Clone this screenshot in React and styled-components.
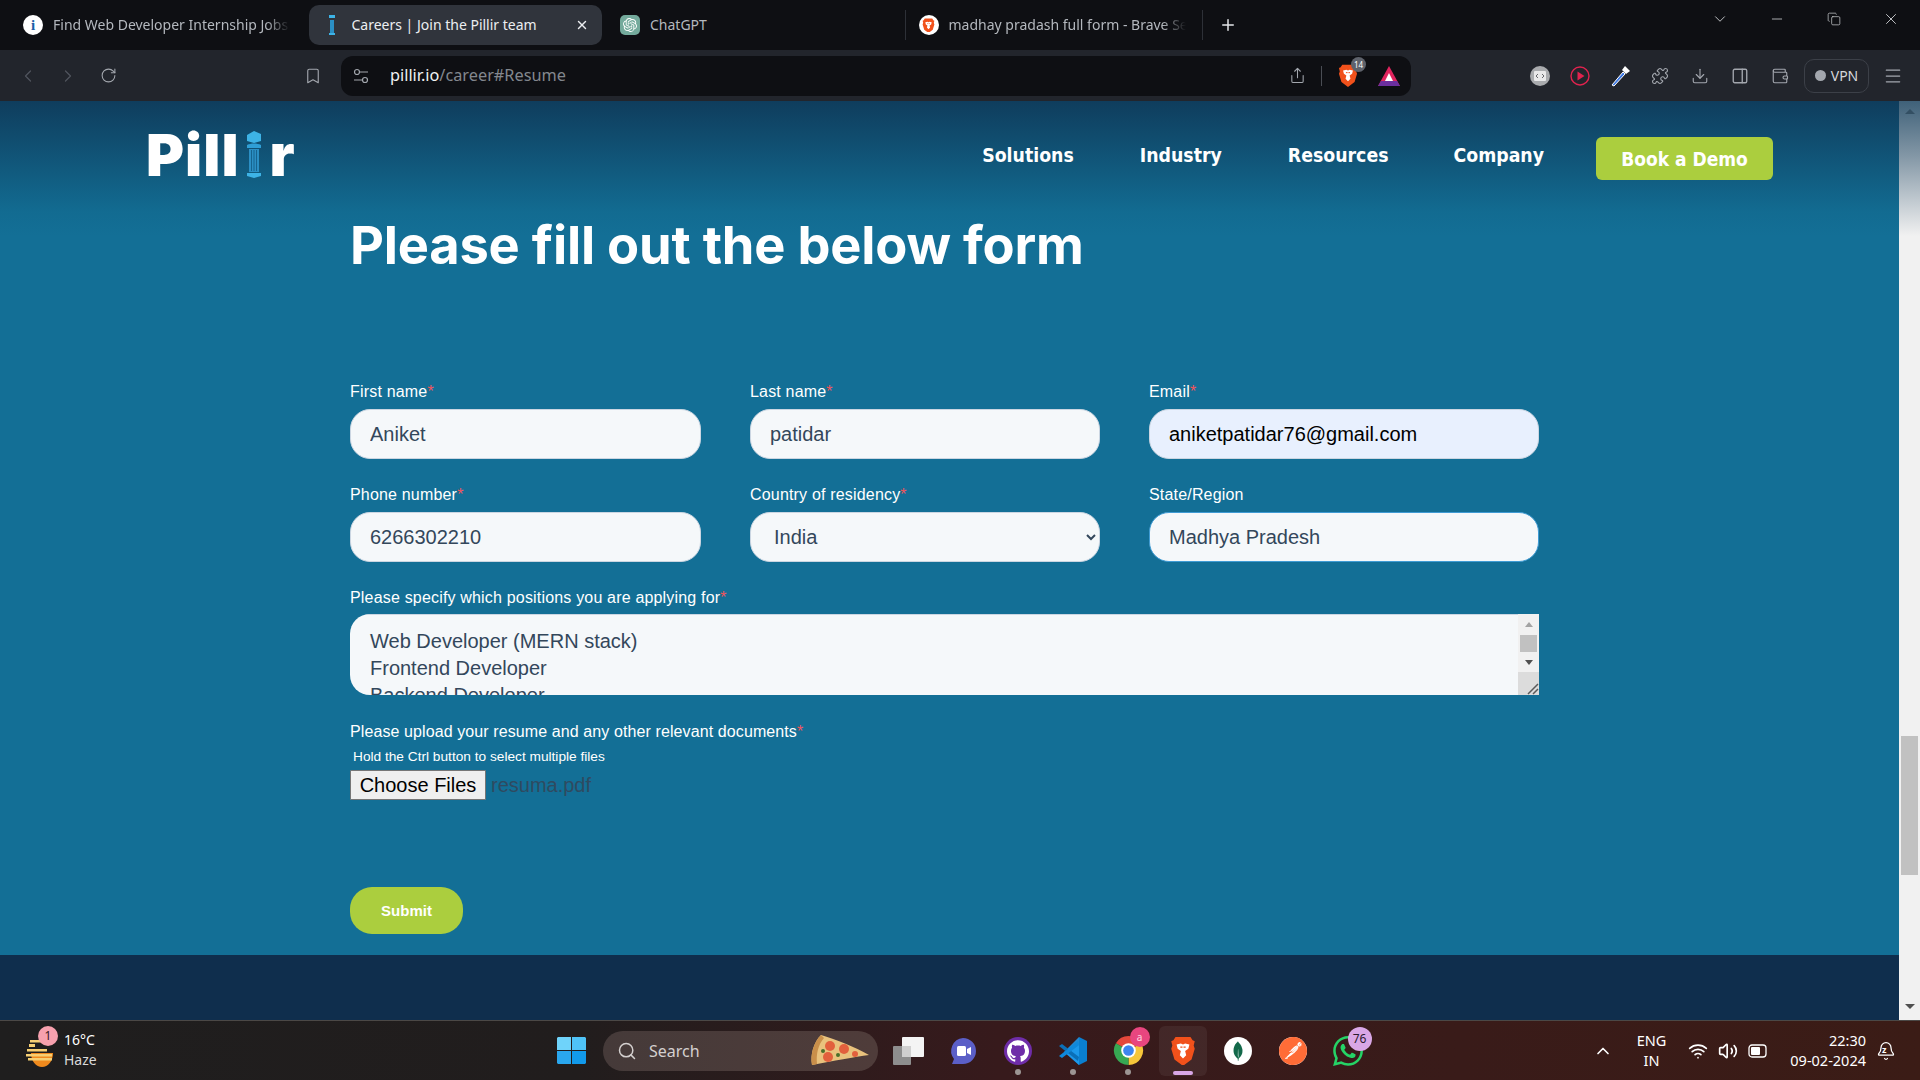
import React from 'react';
import styled, { createGlobalStyle } from 'styled-components';
import {
  ChevronLeft, ChevronRight, ChevronDown, ChevronUp, RotateCw, Bookmark, Share, Puzzle, Download,
  PanelRight, Wallet, Menu, Minus, Copy, X, Plus, Search, Wifi, Volume2, Bell,
} from 'lucide-react';
import { SiOpenai, SiGithub, SiMongodb, SiPostman, SiWhatsapp } from 'react-icons/si';

const GlobalStyle = createGlobalStyle`
  html, body {
    margin: 0;
    padding: 0;
    background: #0e0f13;
  }
  * {
    box-sizing: border-box;
  }
`;

const uiFont = `'Noto Sans', 'Open Sans', sans-serif`;
const formFont = `'Liberation Sans', Arial, sans-serif`;

/* ---- browser chrome ---- */

const Viewport = styled.div`
  display: flex;
  flex-direction: column;
  width: 1920px;
  height: 1080px;
  overflow: hidden;
`;

const TabStrip = styled.div`
  display: flex;
  align-items: center;
  flex: 0 0 50px;
  padding-left: 10px;
  background: #0e0f13;
  font-family: ${uiFont};
`;

const Tab = styled.div`
  display: flex;
  align-items: center;
  gap: 10px;
  width: 293px;
  height: 40px;
  margin-right: 5.5px;
  padding: 0 13px;
  border-radius: 10px;
  background: ${({ $active }) => ($active ? '#30343c' : 'transparent')};
  color: ${({ $active }) => ($active ? '#eceef1' : '#b4b8be')};
  font-size: 14px;
`;

const TabTitle = styled.span`
  flex: 1;
  padding-bottom: 2px;
  overflow: hidden;
  white-space: nowrap;
  mask-image: ${({ $fade }) => ($fade ? 'linear-gradient(90deg, #000 90%, transparent)' : 'none')};
`;

const Favicon = styled.span`
  display: flex;
  align-items: center;
  justify-content: center;
  flex: 0 0 20px;
  height: 20px;
  border-radius: ${({ $radius }) => $radius || '50%'};
  background: ${({ $bg }) => $bg || 'transparent'};
  color: ${({ $color }) => $color || '#fff'};
  font: 700 15px 'Liberation Serif', serif;
`;

const TabDivider = styled.span`
  width: 1px;
  height: 30px;
  margin-left: ${({ $offset }) => $offset || '0'};
  background: #2d3037;
`;

const NewTab = styled.span`
  display: flex;
  margin-left: 16px;
  color: #e4e6e9;
`;

const WindowControls = styled.div`
  display: flex;
  align-items: center;
  margin-left: auto;
  margin-top: -12px;
  padding-right: 1px;
  color: #d0d2d6;
`;

const WindowButton = styled.span`
  display: flex;
  justify-content: center;
  width: 57px;
`;

const Toolbar = styled.div`
  display: flex;
  align-items: center;
  flex: 0 0 51px;
  padding-left: 8px;
  background: #22252c;
  font-family: ${uiFont};
`;

const ToolButton = styled.span`
  display: flex;
  align-items: center;
  justify-content: center;
  flex: 0 0 40px;
  height: 40px;
  margin-left: ${({ $offset }) => $offset || '0'};
  color: ${({ $dim }) => ($dim ? '#50545d' : '#a3a7ae')};
`;

const AddressBar = styled.div`
  display: flex;
  align-items: center;
  width: 1070px;
  height: 40px;
  margin-left: 8px;
  padding: 0 11px 0 12px;
  border-radius: 12px;
  background: #0e0f13;
  color: #a3a7ae;
`;

const AddressText = styled.span`
  margin-left: 21px;
  padding-bottom: 2px;
  font-size: 16.3px;
  color: #83878e;
  b {
    font-weight: 400;
    color: #f1f2f4;
  }
`;

const AddressActions = styled.div`
  display: flex;
  align-items: center;
  margin-left: auto;
`;

const ActionDivider = styled.span`
  width: 1px;
  height: 20px;
  margin: 0 16px 0 15px;
  background: #4a4d54;
`;

const ShieldWrap = styled.span`
  position: relative;
  display: flex;
  margin-right: 20px;
`;

const ShieldCount = styled.span`
  position: absolute;
  top: -7px;
  right: -8px;
  width: 15px;
  height: 15px;
  border-radius: 50%;
  background: #5e626b;
  color: #fff;
  font-size: 8px;
  line-height: 15px;
  text-align: center;
`;

const VpnButton = styled.span`
  display: flex;
  align-items: center;
  justify-content: center;
  gap: 5px;
  width: 65px;
  height: 34px;
  margin: 0 4px;
  border: 1px solid #3c4048;
  border-radius: 10px;
  color: #d5d7db;
  font-size: 14px;
  &::before {
    content: '';
    width: 11px;
    height: 11px;
    border-radius: 50%;
    background: #a3a7ae;
  }
`;

/* ---- the page ---- */

const Main = styled.div`
  display: flex;
  flex: 1;
  min-height: 0;
`;

const Page = styled.div`
  display: flex;
  flex-direction: column;
  flex: 1;
  background: linear-gradient(180deg, #0f3d5d 0, #126b91 110px, #136f96 135px);
`;

const Rail = styled.div`
  display: flex;
  flex-direction: column;
  flex: 0 0 21px;
  background: linear-gradient(180deg, #3f6179 0, #8397a6 55px, #f1f1f1 135px);
`;

const RailArrow = styled.div`
  display: flex;
  align-items: center;
  justify-content: center;
  flex: 0 0 21px;
  margin-top: ${({ $bottom }) => ($bottom ? 'auto' : '0')};
  margin-bottom: ${({ $bottom }) => ($bottom ? '3px' : '0')};
  &::before {
    content: '';
    border-left: 5px solid transparent;
    border-right: 5px solid transparent;
    ${({ $bottom }) => ($bottom ? 'border-top: 5px solid #505050;' : 'border-bottom: 5px solid #334f63;')}
  }
`;

const RailThumb = styled.div`
  height: 139px;
  margin: 614px 2px 0;
  background: #c1c1c1;
`;

const Header = styled.header`
  display: flex;
  align-items: flex-start;
  justify-content: space-between;
  height: 113px;
  padding: 29px 126px 0 146px;
`;

const Logo = styled.div`
  display: flex;
  align-items: flex-end;
  height: 48px;
  margin-top: 1px;
  color: #fff;
  font: 900 58px/48px Inter, sans-serif;
  letter-spacing: 1px;
  svg {
    margin: 0 8px 0 6px;
  }
`;

const Nav = styled.nav`
  display: flex;
  align-items: flex-start;
`;

const NavLink = styled.a`
  margin-right: ${({ $gap }) => $gap};
  padding-top: 4px;
  color: #fff;
  font: 700 19.3px/44px 'DejaVu Sans Condensed', 'DejaVu Sans', sans-serif;
`;

const DemoButton = styled.button`
  width: 177px;
  height: 43px;
  margin-top: 7px;
  border: 0;
  border-radius: 6px;
  background: #abce3e;
  color: #fff;
  font: 700 19px 'DejaVu Sans Condensed', 'DejaVu Sans', sans-serif;
`;

const FormSection = styled.form`
  flex: 1;
  padding-left: 350px;
  font-family: ${formFont};
`;

const Heading = styled.h1`
  margin: 0 0 104px;
  color: #fff;
  font: 700 52.4px/62px Inter, sans-serif;
  letter-spacing: -0.2px;
`;

const FieldGrid = styled.div`
  display: grid;
  grid-template-columns: 351px 350px 390px;
  column-gap: 49px;
  row-gap: 24px;
  width: 1190px;
`;

const Label = styled.label`
  display: block;
  height: 20px;
  margin-bottom: ${({ $tight }) => ($tight ? '8px' : '9px')};
  color: #fff;
  font-size: 16px;
  line-height: 23px;
  letter-spacing: 0.18px;
`;

const Required = styled.span`
  color: #f2545b;
`;

const TextInput = styled.input`
  display: block;
  width: 100%;
  height: 50px;
  padding: 0 19px;
  border: 1px solid ${({ $focused }) => ($focused ? '#3f9bd4' : '#cbd6e2')};
  border-radius: 20px;
  outline: 0;
  background: ${({ $autofill }) => ($autofill ? '#e8f0fe' : '#f5f8fa')};
  color: ${({ $autofill }) => ($autofill ? '#000' : '#33475b')};
  font: 20px ${formFont};
`;

const SelectInput = styled.select`
  display: block;
  width: 100%;
  height: 50px;
  padding: 0 3px 0 19px;
  border: 1px solid #cbd6e2;
  border-radius: 20px;
  outline: 0;
  background: #f5f8fa;
  color: #33475b;
  font: 20px ${formFont};
`;

const AreaField = styled.div`
  grid-column: 1 / -1;
`;

const AreaBox = styled.div`
  display: flex;
  height: 81px;
  border-radius: 20px 0 0 20px;
  background: #f5f8fa;
  overflow: hidden;
`;

const AreaText = styled.textarea`
  flex: 1;
  padding: 13px 19px 0 20px;
  border: 0;
  border-top: 1px solid #cbd6e2;
  outline: 0;
  resize: none;
  overflow: hidden;
  background: transparent;
  color: #33475b;
  font: 20px/27px ${formFont};
`;

const AreaScroll = styled.div`
  display: flex;
  flex-direction: column;
  flex: 0 0 21px;
  background: #f1f1f1;
`;

const AreaArrow = styled.div`
  display: flex;
  align-items: center;
  justify-content: center;
  height: 20px;
  &::before {
    content: '';
    border-left: 4.5px solid transparent;
    border-right: 4.5px solid transparent;
    ${({ $down }) => ($down ? 'border-top: 5px solid #505050;' : 'border-bottom: 5px solid #a3a3a3;')}
  }
`;

const AreaThumb = styled.div`
  height: 17px;
  margin: 1px 2px 0;
  background: #c1c1c1;
`;

const AreaGrip = styled.div`
  display: flex;
  align-items: flex-end;
  justify-content: flex-end;
  height: 23px;
  margin-top: auto;
  background: #dcdcdc;
`;

const UploadBlock = styled.div`
  margin-top: 27px;
`;

const UploadLabel = styled(Label)`
  margin-bottom: 5px;
  line-height: 20px;
  letter-spacing: 0.1px;
`;

const Hint = styled.div`
  height: 19px;
  padding-left: 3px;
  color: #fff;
  font-size: 13.7px;
  line-height: 19px;
`;

const FileRow = styled.div`
  display: flex;
  align-items: center;
  gap: 5px;
  margin-top: 4px;
`;

const ChooseButton = styled.button`
  width: 136px;
  height: 30px;
  padding: 0;
  border: 1px solid #767676;
  border-radius: 1px;
  background: #efefef;
  color: #000;
  font: 20px ${formFont};
`;

const FileName = styled.span`
  color: #2f4a60;
  font-size: 20px;
`;

const SubmitButton = styled.button`
  display: block;
  width: 113px;
  height: 47px;
  margin-top: 87px;
  border: 0;
  border-radius: 22px;
  background: #abce3e;
  color: #fff;
  font: 700 15px ${formFont};
`;

const Footer = styled.footer`
  flex: 0 0 65px;
  background: #0f2e4d;
`;

/* ---- windows taskbar ---- */

const Taskbar = styled.div`
  display: flex;
  align-items: center;
  flex: 0 0 60px;
  border-top: 1px solid #4b4846;
  background: linear-gradient(90deg, #1f1e1e 0, #211d1d 30%, #371a1c 52%, #3b1c16 100%);
  color: #fff;
  font-family: ${uiFont};
`;

const Weather = styled.div`
  display: flex;
  align-items: center;
  flex: 0 0 553px;
  gap: 9px;
  padding-left: 25px;
`;

const WeatherIcon = styled.span`
  position: relative;
  display: flex;
`;

const WeatherBadge = styled.span`
  position: absolute;
  top: -8px;
  right: -3px;
  width: 20px;
  height: 20px;
  border-radius: 50%;
  background: #f7a1ae;
  color: #3a1a20;
  font-size: 12px;
  line-height: 20px;
  text-align: center;
`;

const WeatherText = styled.div`
  padding-bottom: 2px;
  font-size: 14px;
  line-height: 20px;
  span {
    display: block;
    color: #d9d9d9;
  }
`;

const StartButton = styled.span`
  display: flex;
  justify-content: center;
  flex: 0 0 36px;
`;

const SearchPill = styled.div`
  display: flex;
  align-items: center;
  width: 275px;
  height: 40px;
  margin: 0 2.5px 0 14px;
  padding: 0 8px 0 14px;
  border-radius: 20px;
  background: linear-gradient(90deg, #453a39, #4f3c3a);
  color: #d4d0cf;
  font-size: 16px;
  span {
    margin-left: 12px;
  }
  svg:last-child {
    margin-left: auto;
  }
`;

const TaskIcon = styled.div`
  position: relative;
  display: flex;
  align-items: center;
  justify-content: center;
  flex: 0 0 55px;
  height: 50px;
  border-radius: 6px;
  background: ${({ $active }) => ($active ? 'rgba(255,255,255,0.06)' : 'transparent')};
  ${({ $active }) => ($active ? 'flex-basis: 48px; margin: 0 3.5px;' : '')}
`;

const RunDot = styled.span`
  position: absolute;
  bottom: 1px;
  left: 50%;
  width: ${({ $wide }) => ($wide ? '20px' : '6px')};
  height: ${({ $wide }) => ($wide ? '4px' : '6px')};
  margin-left: ${({ $wide }) => ($wide ? '-10px' : '-3px')};
  border-radius: 3px;
  background: ${({ $wide }) => ($wide ? '#d9a7e6' : '#9c9593')};
`;

const IconDisc = styled.span`
  display: flex;
  align-items: center;
  justify-content: center;
  width: 28px;
  height: 28px;
  border-radius: 50%;
  background: ${({ $bg }) => $bg};
`;

const CountBadge = styled.span`
  position: absolute;
  top: ${({ $top }) => $top};
  right: ${({ $right }) => $right};
  min-width: ${({ $size }) => $size};
  height: ${({ $size }) => $size};
  border-radius: 50%;
  background: ${({ $bg }) => $bg};
  color: ${({ $color }) => $color};
  font-size: ${({ $font }) => $font};
  line-height: ${({ $size }) => $size};
  text-align: center;
`;

const Tray = styled.div`
  display: flex;
  align-items: center;
  margin-left: auto;
  padding-right: 24px;
`;

const TrayText = styled.div`
  margin: ${({ $margin }) => $margin};
  padding-bottom: 2px;
  font-size: 14.5px;
  line-height: 20px;
  text-align: ${({ $align }) => $align};
`;

const TrayIcons = styled.div`
  display: flex;
  align-items: center;
  gap: 10px;
`;

const SnoozeBell = styled.span`
  position: relative;
  display: flex;
  span {
    position: absolute;
    top: 4px;
    left: 6px;
    font-size: 9px;
    font-weight: 700;
    line-height: 10px;
  }
`;

/* ---- drawings ---- */

const PillarMark = ({ height = 50 }) => (
  <svg width="16" height={height} viewBox="0 0 16 48">
    <path d="M1 5 8 1l7 3v7l-7 2-7-2z" fill="#3db3e6" />
    <path d="M1 15c4-2 10-2 14 0v3H1z" fill="#2f9fd6" />
    <path d="M3 19h10v23H3z" fill="#2b8fc4" />
    <path d="M5.500 20v21M8 20v21M10.500 20v21" stroke="#16648f" strokeWidth="1" />
    <path d="M1 43h14v3l-7 2-7-2z" fill="#3db3e6" />
  </svg>
);

const TabPillar = () => (
  <svg width="8" height="20" viewBox="0 0 8 20">
    <path d="M1 0h6v3H1z" fill="#3db3e6" />
    <path d="M2 5h4v13H2z" fill="#2b8fc4" />
    <path d="M1 18h6v2H1z" fill="#3db3e6" />
  </svg>
);

const BraveMark = ({ size = 24 }) => (
  <svg width={size} height={size * 1.15} viewBox="0 0 24 28">
    <path d="M5 1h14l2 3 2 1-1 4 1 3-3 10-8 6-8-6L1 12l1-3-1-4 2-1z" fill="#f1511b" />
    <path d="M6 8l4-1 2 1 2-1 4 1-1 4-3 2 1 4-3 3-3-3 1-4-3-2z" fill="#fff" />
    <path d="M9.500 10.500h2M12.500 10.500h2" stroke="#f1511b" strokeWidth="1.200" />
  </svg>
);

const BatTriangle = () => (
  <svg width="22" height="20" viewBox="0 0 22 20">
    <path d="M11 0 22 20H0z" fill="#e0245e" />
    <path d="M0 20h22l-3-5H3z" fill="#6b2f9e" />
    <path d="M11 7l4 8H7z" fill="#fff" />
  </svg>
);

const CodeBadge = () => (
  <svg width="20" height="20" viewBox="0 0 20 20">
    <circle cx="10" cy="10" r="10" fill="#a9abae" />
    <rect x="4" y="5" width="12" height="10" rx="1" fill="#e9e9ea" />
    <path d="M8 8l-2 2 2 2M12 8l2 2-2 2" stroke="#66686c" strokeWidth="1" fill="none" />
  </svg>
);

const PlayRing = () => (
  <svg width="20" height="20" viewBox="0 0 20 20">
    <circle cx="10" cy="10" r="9" stroke="#e0234e" strokeWidth="1.400" fill="none" />
    <path d="M7.500 5.500 14.500 10l-7 4.500z" fill="#e0234e" />
  </svg>
);

const MagicWand = () => (
  <svg width="22" height="22" viewBox="0 0 22 22">
    <path d="M3 20 14 7l2 2L5 21z" fill="#3b78e7" stroke="#fff" strokeWidth="1" />
    <path d="M13 5l3-4 5 5-4 3z" fill="#fff" />
  </svg>
);

const SiteSettings = () => (
  <svg width="16" height="16" viewBox="0 0 16 16" fill="none" stroke="currentColor" strokeWidth="1.200">
    <circle cx="4" cy="4" r="2.500" />
    <path d="M7 4h8M1 12h8" />
    <circle cx="12" cy="12" r="2.500" />
  </svg>
);

const ResizeGrip = () => (
  <svg width="12" height="12" viewBox="0 0 12 12" stroke="#5a5a5a" strokeWidth="1.500">
    <path d="M1 11 11 1M6 11l5-5" />
  </svg>
);

const WeatherGlyph = () => (
  <svg width="30" height="34" viewBox="0 0 30 34">
    <path d="M6 19h22c0 8-5 14-11 14S6 27 6 19z" fill="#f08a1d" />
    <path d="M4 10h6v3H4zM2 15h20v2.500H2zM5 6h14v2.500H5zM1 20h26v2.500H1zM3 24h24v2.500H3z" fill="#f6cf73" />
  </svg>
);

const WindowsLogo = () => (
  <svg width="29" height="29" viewBox="0 0 29 29">
    <path d="M1 1h13v13H0V2z" fill="#6fd3fa" />
    <path d="M15 1h13l1 1v12H15z" fill="#4fc3f7" />
    <path d="M0 15h14v13H1l-1-1z" fill="#2aa7ee" />
    <path d="M15 15h14v12l-1 1H15z" fill="#129aeb" />
  </svg>
);

const Pizza = () => (
  <svg width="62" height="34" viewBox="0 0 62 34">
    <path d="M4 31C2 20 6 8 13 1c14 4 34 12 48 20-14 2-36 6-57 10z" fill="#e9c27d" />
    <path d="M4 31C2 20 6 8 13 1l3 3C10 11 8 20 9 30z" fill="#c98f4a" />
    <circle cx="22" cy="12" r="5" fill="#e2603d" />
    <circle cx="36" cy="15" r="5" fill="#e2603d" />
    <circle cx="20" cy="23" r="5" fill="#e2603d" />
    <circle cx="47" cy="20" r="3" fill="#e2603d" />
    <circle cx="30" cy="21" r="2" fill="#4a6f2a" />
    <circle cx="15" cy="17" r="2" fill="#4a6f2a" />
  </svg>
);

const TaskView = () => (
  <svg width="31" height="30" viewBox="0 0 31 30">
    <rect x="9" y="1" width="22" height="20" rx="1" fill="#f4f4f4" />
    <rect x="0" y="10" width="18" height="19" rx="1" fill="#8e8e8e" />
    <rect x="9" y="10" width="9" height="11" fill="#d0d0d0" />
  </svg>
);

const MeetBubble = () => (
  <svg width="28" height="28" viewBox="0 0 28 28">
    <path d="M14 1a13 13 0 0 1 0 26H3l2-5A13 13 0 0 1 14 1z" fill="#5b5fc7" />
    <rect x="8" y="9" width="9" height="10" rx="1.500" fill="#fff" />
    <path d="M18 12l4-2v8l-4-2z" fill="#fff" />
  </svg>
);

const CodeEditorMark = () => (
  <svg width="30" height="30" viewBox="0 0 30 30">
    <path d="M21 1 29 5v20l-8 4-12-11 12-9z" fill="#0a7fd0" />
    <path d="M21 1v28L6 16z" fill="#1f9cf0" opacity="0.85" />
    <path d="M1 10l3-2 17 13-1 4z" fill="#0a6fb8" />
    <path d="M1 20l3 2 17-13-1-4z" fill="#0e88dc" />
  </svg>
);

const ChromeMark = () => (
  <svg width="31" height="31" viewBox="0 0 32 32">
    <path d="M16 16 3 8.500A15 15 0 0 1 29 8.500z" fill="#e5483b" />
    <path d="M16 16 29 8.500A15 15 0 0 1 16 31z" fill="#f7c63a" />
    <path d="M16 16 16 31A15 15 0 0 1 3 8.500z" fill="#37a853" />
    <circle cx="16" cy="16" r="7.500" fill="#fff" />
    <circle cx="16" cy="16" r="5.500" fill="#3d85f0" />
  </svg>
);

const BatteryGlyph = () => (
  <svg width="20" height="20" viewBox="0 0 20 20" fill="none">
    <rect x="1" y="4" width="17" height="12" rx="3" stroke="#fff" strokeWidth="1.300" />
    <rect x="3" y="6" width="9" height="8" rx="1" fill="#fff" />
  </svg>
);

const FieldLabel = ({ required, tight, children }) => (
  <Label $tight={tight}>
    {children}
    {required && <Required>*</Required>}
  </Label>
);

function App() {
  return (
    <Viewport>
      <GlobalStyle />

      <TabStrip>
        <Tab>
          <Favicon $bg="#fff" $color="#1c5fa8">i</Favicon>
          <TabTitle $fade>Find Web Developer Internship Jobs</TabTitle>
        </Tab>
        <Tab $active>
          <Favicon><TabPillar /></Favicon>
          <TabTitle>Careers | Join the Pillir team</TabTitle>
          <X size={14} strokeWidth={2.5} />
        </Tab>
        <Tab>
          <Favicon $bg="#74aa9c" $radius="5px"><SiOpenai size={14} /></Favicon>
          <TabTitle>ChatGPT</TabTitle>
        </Tab>
        <TabDivider $offset="-1px" />
        <Tab>
          <Favicon $bg="#fff"><BraveMark size={13} /></Favicon>
          <TabTitle $fade>madhay pradash full form - Brave Search</TabTitle>
        </Tab>
        <TabDivider $offset="-2px" />
        <NewTab><Plus size={18} /></NewTab>
        <WindowControls>
          <WindowButton><ChevronDown size={18} strokeWidth={1.2} /></WindowButton>
          <WindowButton><Minus size={16} strokeWidth={1.2} /></WindowButton>
          <WindowButton><Copy size={14} strokeWidth={1.2} /></WindowButton>
          <WindowButton><X size={18} strokeWidth={1.2} /></WindowButton>
        </WindowControls>
      </TabStrip>

      <Toolbar>
        <ToolButton $dim><ChevronLeft size={20} strokeWidth={1.5} /></ToolButton>
        <ToolButton $dim><ChevronRight size={20} strokeWidth={1.5} /></ToolButton>
        <ToolButton><RotateCw size={17} strokeWidth={1.5} /></ToolButton>
        <ToolButton $offset="165px"><Bookmark size={18} strokeWidth={1.5} /></ToolButton>
        <AddressBar>
          <SiteSettings />
          <AddressText><b>pillir.io</b>/career#Resume</AddressText>
          <AddressActions>
            <Share size={17} strokeWidth={1.5} />
            <ActionDivider />
            <ShieldWrap>
              <BraveMark size={20} />
              <ShieldCount>14</ShieldCount>
            </ShieldWrap>
            <BatTriangle />
          </AddressActions>
        </AddressBar>
        <ToolButton $offset="109px"><CodeBadge /></ToolButton>
        <ToolButton><PlayRing /></ToolButton>
        <ToolButton><MagicWand /></ToolButton>
        <ToolButton><Puzzle size={18} strokeWidth={1.5} /></ToolButton>
        <ToolButton><Download size={18} strokeWidth={1.5} /></ToolButton>
        <ToolButton><PanelRight size={18} strokeWidth={1.8} /></ToolButton>
        <ToolButton><Wallet size={18} strokeWidth={1.5} /></ToolButton>
        <VpnButton>VPN</VpnButton>
        <ToolButton><Menu size={20} strokeWidth={1.5} /></ToolButton>
      </Toolbar>

      <Main>
        <Page>
          <Header>
            <Logo>Pill<PillarMark />r</Logo>
            <Nav>
              <NavLink $gap="66px">Solutions</NavLink>
              <NavLink $gap="66px">Industry</NavLink>
              <NavLink $gap="65px">Resources</NavLink>
              <NavLink $gap="52px">Company</NavLink>
              <DemoButton type="button">Book a Demo</DemoButton>
            </Nav>
          </Header>

          <FormSection>
            <Heading>Please fill out the below form</Heading>
            <FieldGrid>
              <div>
                <FieldLabel required>First name</FieldLabel>
                <TextInput defaultValue="Aniket" />
              </div>
              <div>
                <FieldLabel required>Last name</FieldLabel>
                <TextInput defaultValue="patidar" />
              </div>
              <div>
                <FieldLabel required>Email</FieldLabel>
                <TextInput $autofill defaultValue="aniketpatidar76@gmail.com" />
              </div>
              <div>
                <FieldLabel required>Phone number</FieldLabel>
                <TextInput defaultValue="6266302210" />
              </div>
              <div>
                <FieldLabel required>Country of residency</FieldLabel>
                <SelectInput defaultValue="India">
                  <option>India</option>
                </SelectInput>
              </div>
              <div>
                <FieldLabel>State/Region</FieldLabel>
                <TextInput $focused defaultValue="Madhya Pradesh" />
              </div>
              <AreaField>
                <FieldLabel required tight>Please specify which positions you are applying for</FieldLabel>
                <AreaBox>
                  <AreaText readOnly value={'Web Developer (MERN stack)\nFrontend Developer\nBackend Developer'} />
                  <AreaScroll>
                    <AreaArrow />
                    <AreaThumb />
                    <AreaArrow $down />
                    <AreaGrip><ResizeGrip /></AreaGrip>
                  </AreaScroll>
                </AreaBox>
              </AreaField>
            </FieldGrid>

            <UploadBlock>
              <UploadLabel>
                Please upload your resume and any other relevant documents<Required>*</Required>
              </UploadLabel>
              <Hint>Hold the Ctrl button to select multiple files</Hint>
              <FileRow>
                <ChooseButton type="button">Choose Files</ChooseButton>
                <FileName>resuma.pdf</FileName>
              </FileRow>
            </UploadBlock>

            <SubmitButton type="button">Submit</SubmitButton>
          </FormSection>

          <Footer />
        </Page>
        <Rail>
          <RailArrow />
          <RailThumb />
          <RailArrow $bottom />
        </Rail>
      </Main>

      <Taskbar>
        <Weather>
          <WeatherIcon>
            <WeatherGlyph />
            <WeatherBadge>1</WeatherBadge>
          </WeatherIcon>
          <WeatherText>
            16°C
            <span>Haze</span>
          </WeatherText>
        </Weather>
        <StartButton><WindowsLogo /></StartButton>
        <SearchPill>
          <Search size={20} strokeWidth={1.8} />
          <span>Search</span>
          <Pizza />
        </SearchPill>
        <TaskIcon><TaskView /></TaskIcon>
        <TaskIcon><MeetBubble /></TaskIcon>
        <TaskIcon>
          <IconDisc $bg="#6f2da8"><SiGithub size={22} color="#fff" /></IconDisc>
          <RunDot />
        </TaskIcon>
        <TaskIcon>
          <CodeEditorMark />
          <RunDot />
        </TaskIcon>
        <TaskIcon>
          <ChromeMark />
          <CountBadge $top="1px" $right="6px" $size="20px" $bg="#e8467f" $color="#ffd7e4" $font="10px">a</CountBadge>
          <RunDot />
        </TaskIcon>
        <TaskIcon $active>
          <BraveMark size={26} />
          <RunDot $wide />
        </TaskIcon>
        <TaskIcon>
          <IconDisc $bg="#fff"><SiMongodb size={20} color="#13694a" /></IconDisc>
        </TaskIcon>
        <TaskIcon>
          <IconDisc $bg="#fff"><SiPostman size={30} color="#ff6c37" /></IconDisc>
        </TaskIcon>
        <TaskIcon>
          <SiWhatsapp size={30} color="#25d366" />
          <CountBadge $top="1px" $right="4px" $size="24px" $bg="#d9a7e6" $color="#2a1a2e" $font="12px">76</CountBadge>
        </TaskIcon>
        <Tray>
          <ChevronUp size={20} strokeWidth={2} />
          <TrayText $margin="0 22px 0 24px" $align="center">ENG<br />IN</TrayText>
          <TrayIcons>
            <Wifi size={20} />
            <Volume2 size={20} />
            <BatteryGlyph />
          </TrayIcons>
          <TrayText $margin="0 10px 0 22px" $align="right">22:30<br />09-02-2024</TrayText>
          <SnoozeBell>
            <Bell size={20} strokeWidth={1.5} />
            <span>z</span>
          </SnoozeBell>
        </Tray>
      </Taskbar>
    </Viewport>
  );
}

export default App;
